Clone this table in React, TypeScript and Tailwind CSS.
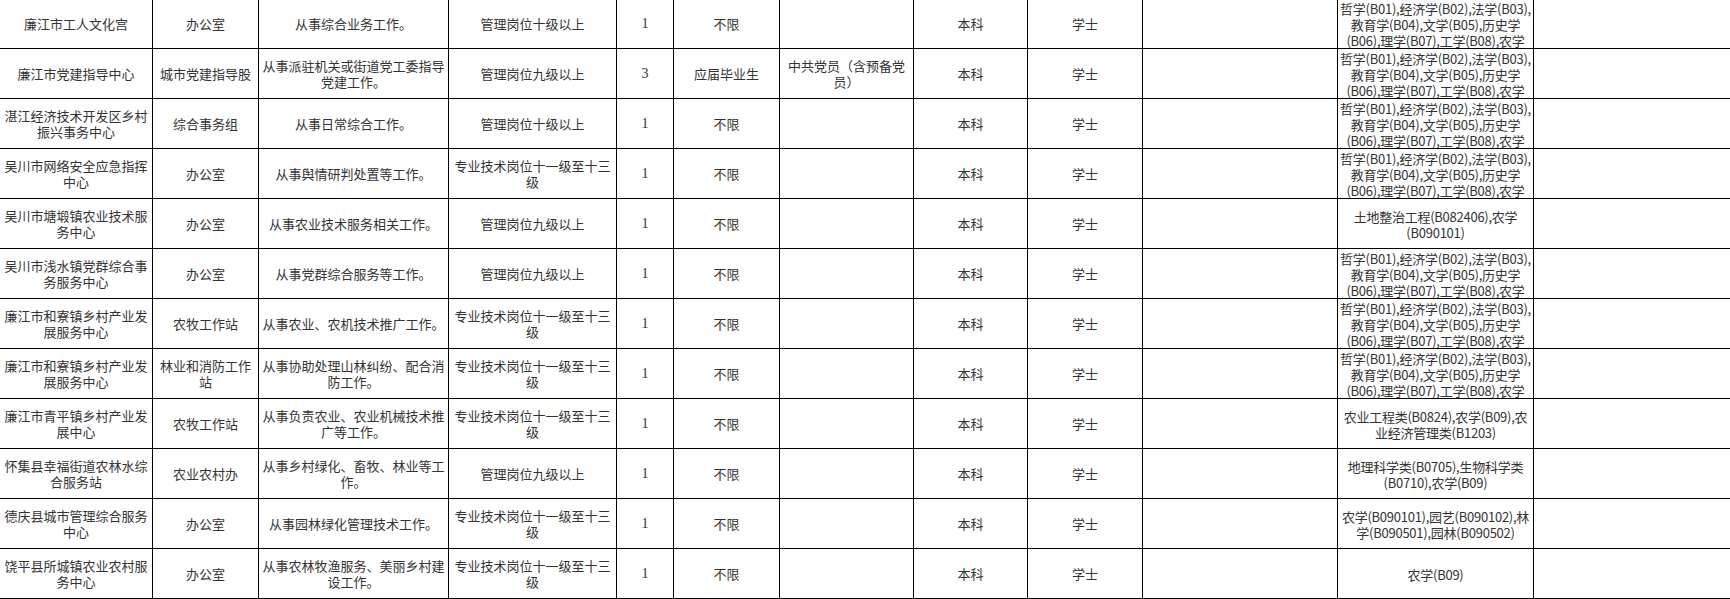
import React from 'react';

const majorsA = [
    '哲学(B01),经济学(B02),法学(B03),',
    '教育学(B04),文学(B05),历史学',
    '(B06),理学(B07),工学(B08),农学',
];

type Row = {
    unit: string;
    dept: string;
    duty: string;
    level: string;
    count: string;
    source: string;
    politics: string;
    majors: string[];
};

const rows: Row[] = [
    { unit: '廉江市工人文化宫', dept: '办公室', duty: '从事综合业务工作。', level: '管理岗位十级以上', count: '1', source: '不限', politics: '', majors: majorsA },
    { unit: '廉江市党建指导中心', dept: '城市党建指导股', duty: '从事派驻机关或街道党工委指导党建工作。', level: '管理岗位九级以上', count: '3', source: '应届毕业生', politics: '中共党员（含预备党员）', majors: majorsA },
    { unit: '湛江经济技术开发区乡村振兴事务中心', dept: '综合事务组', duty: '从事日常综合工作。', level: '管理岗位十级以上', count: '1', source: '不限', politics: '', majors: majorsA },
    { unit: '吴川市网络安全应急指挥中心', dept: '办公室', duty: '从事舆情研判处置等工作。', level: '专业技术岗位十一级至十三级', count: '1', source: '不限', politics: '', majors: majorsA },
    { unit: '吴川市塘塅镇农业技术服务中心', dept: '办公室', duty: '从事农业技术服务相关工作。', level: '管理岗位九级以上', count: '1', source: '不限', politics: '', majors: ['土地整治工程(B082406),农学', '(B090101)'] },
    { unit: '吴川市浅水镇党群综合事务服务中心', dept: '办公室', duty: '从事党群综合服务等工作。', level: '管理岗位九级以上', count: '1', source: '不限', politics: '', majors: majorsA },
    { unit: '廉江市和寮镇乡村产业发展服务中心', dept: '农牧工作站', duty: '从事农业、农机技术推广工作。', level: '专业技术岗位十一级至十三级', count: '1', source: '不限', politics: '', majors: majorsA },
    { unit: '廉江市和寮镇乡村产业发展服务中心', dept: '林业和消防工作站', duty: '从事协助处理山林纠纷、配合消防工作。', level: '专业技术岗位十一级至十三级', count: '1', source: '不限', politics: '', majors: majorsA },
    { unit: '廉江市青平镇乡村产业发展中心', dept: '农牧工作站', duty: '从事负责农业、农业机械技术推广等工作。', level: '专业技术岗位十一级至十三级', count: '1', source: '不限', politics: '', majors: ['农业工程类(B0824),农学(B09),农', '业经济管理类(B1203)'] },
    { unit: '怀集县幸福街道农林水综合服务站', dept: '农业农村办', duty: '从事乡村绿化、畜牧、林业等工作。', level: '管理岗位九级以上', count: '1', source: '不限', politics: '', majors: ['地理科学类(B0705),生物科学类', '(B0710),农学(B09)'] },
    { unit: '德庆县城市管理综合服务中心', dept: '办公室', duty: '从事园林绿化管理技术工作。', level: '专业技术岗位十一级至十三级', count: '1', source: '不限', politics: '', majors: ['农学(B090101),园艺(B090102),林', '学(B090501),园林(B090502)'] },
    { unit: '饶平县所城镇农业农村服务中心', dept: '办公室', duty: '从事农林牧渔服务、美丽乡村建设工作。', level: '专业技术岗位十一级至十三级', count: '1', source: '不限', politics: '', majors: ['农学(B09)'] },
];

const Cell = ({ children, className = '' }: { children?: React.ReactNode; className?: string }) => (
    <div className={`flex items-center justify-center overflow-hidden border-r border-black px-[3px] text-center ${className}`}>
        {children}
    </div>
);

const App = () => {
    return (
        <div className="h-[599px] w-[1730px] overflow-hidden bg-white font-['Noto_Sans_CJK_SC',sans-serif] text-[13px] leading-[16px] text-[#333]">
            <div className="-mt-px w-max">
                {rows.map((r, i) => (
                    <div
                        key={i}
                        className="grid h-[50px] grid-cols-[153px_106px_190px_168px_57px_106px_134px_114px_115px_195px_196px_250px] border-b border-black"
                    >
                        <Cell>{r.unit}</Cell>
                        <Cell>{r.dept}</Cell>
                        <Cell>{r.duty}</Cell>
                        <Cell>{r.level}</Cell>
                        <Cell className="font-['Liberation_Serif',serif] text-[14px]">{r.count}</Cell>
                        <Cell>{r.source}</Cell>
                        <Cell>{r.politics}</Cell>
                        <Cell>本科</Cell>
                        <Cell>学士</Cell>
                        <Cell />
                        <Cell className="flex-col pt-[2px] tracking-[-0.25px]">
                            {r.majors.map((m, j) => (
                                <span key={j} className="whitespace-nowrap">{m}</span>
                            ))}
                        </Cell>
                        <Cell />
                    </div>
                ))}
            </div>
        </div>
    );
};

export default App;
